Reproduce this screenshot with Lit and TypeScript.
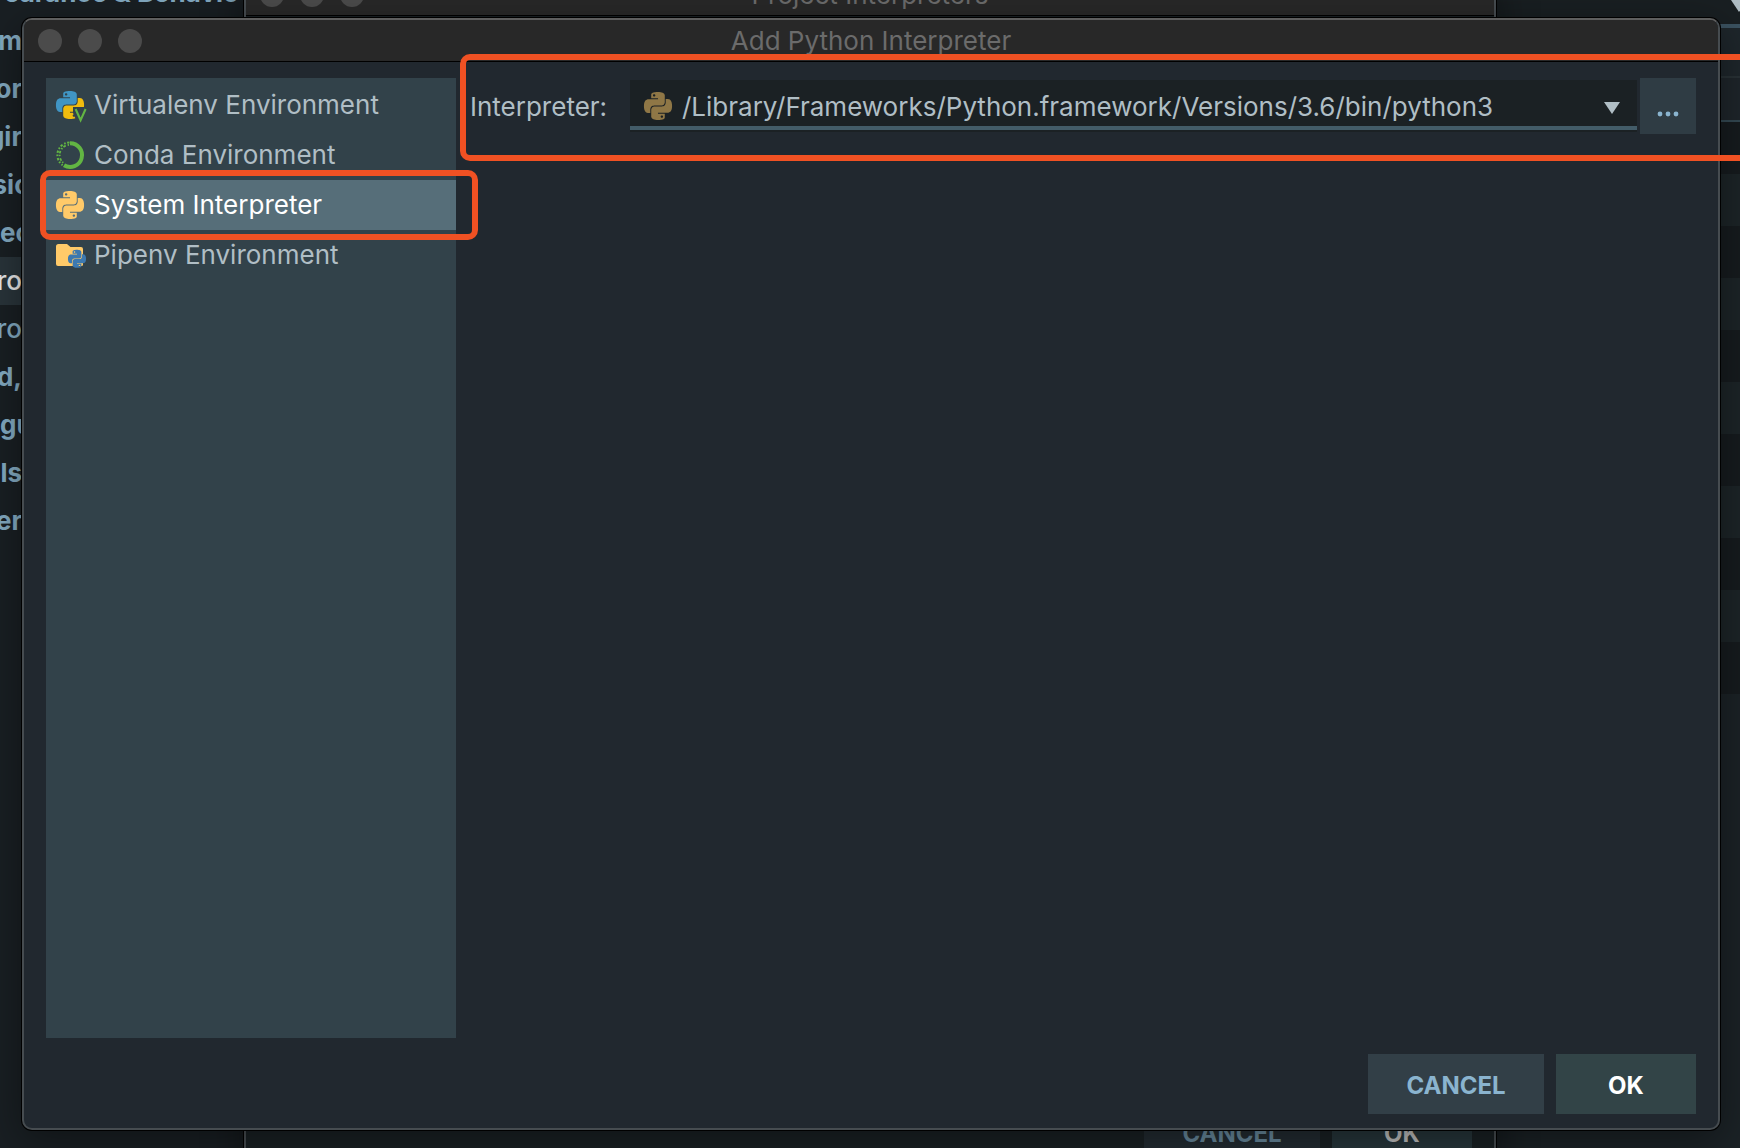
import { LitElement, html, css, svg } from "lit";
import { customElement, property, state } from "lit/decorators.js";
import { classMap } from "lit/directives/class-map.js";

const PY_TOP =
  "M14.25.18l.9.2.73.26.59.3.45.32.34.34.25.34.16.33.1.3.04.26.02.2-.01.13V8.5l-.05.63-.13.55-.21.46-.26.38-.3.31-.33.25-.35.19-.35.14-.33.1-.3.07-.26.04-.21.02H8.77l-.69.05-.59.14-.5.22-.41.27-.33.32-.27.35-.2.36-.15.37-.1.35-.07.32-.04.27-.02.21v3.06H3.17l-.21-.03-.28-.07-.32-.12-.35-.18-.36-.26-.36-.36-.35-.46-.32-.59-.28-.73-.21-.88-.14-1.05-.05-1.23.06-1.22.16-1.04.24-.87.32-.71.36-.57.4-.44.42-.33.42-.24.4-.16.36-.1.32-.05.24-.01h.16l.06.01h8.16v-.83H6.18l-.01-2.75-.02-.37.05-.34.11-.31.17-.28.25-.26.31-.23.38-.2.44-.18.51-.15.58-.12.64-.1.71-.06.77-.04.84-.02 1.27.05zm-6.3 1.98l-.23.33-.08.41.08.41.23.34.33.22.41.09.41-.09.33-.22.23-.34.08-.41-.08-.41-.23-.33-.33-.22-.41-.09-.41.09z";
const PY_BOTTOM =
  "M21.04 6.11l.28.06.32.12.35.18.36.27.36.35.35.47.32.59.28.73.21.88.14 1.04.05 1.23-.06 1.23-.16 1.04-.24.86-.32.71-.36.57-.4.45-.42.33-.42.24-.4.16-.36.09-.32.05-.24.02-.16-.01h-8.22v.82h5.84l.01 2.76.02.36-.05.34-.11.31-.17.29-.25.25-.31.24-.38.2-.44.17-.51.15-.58.13-.64.09-.71.07-.77.04-.84.01-1.27-.04-1.07-.14-.9-.2-.73-.25-.59-.3-.45-.33-.34-.34-.25-.34-.16-.33-.1-.3-.04-.25-.02-.2.01-.13v-5.34l.05-.64.13-.54.21-.46.26-.38.3-.32.33-.24.35-.2.35-.14.33-.1.3-.06.26-.04.21-.02.13-.01h5.84l.69-.05.59-.14.5-.21.41-.28.33-.32.27-.35.2-.36.15-.36.1-.35.07-.32.04-.28.02-.21V6.07h2.09l.14.01zm-6.47 14.25l-.23.33-.08.41.08.41.23.33.33.23.41.08.41-.08.33-.23.23-.33.08-.41-.08-.41-.23-.33-.33-.23-.41-.08-.41.08z";

const python = (top: string, bottom: string) => svg`
  <path d=${PY_TOP} fill=${top}></path>
  <path d=${PY_BOTTOM} fill=${bottom}></path>`;

type IconName = "virtualenv" | "conda" | "system" | "muted" | "pipenv";

@customElement("env-icon")
class EnvIcon extends LitElement {
  @property() name: IconName = "system";

  static styles = css`
    :host { display: block; width: 28px; height: 28px; flex: none; }
    .glyph { display: block; width: 28px; height: 28px; overflow: visible; }
  `;

  private shapes() {
    switch (this.name) {
      case "virtualenv":
        return svg`
          <g transform="scale(1.1667)">${python("#4095c4", "#f0bc0e")}</g>
          <path d="M17 16H31V31H21L17 22Z" fill="#32424a"></path>
          <path d="M19.6 18L24.6 29.2L29.6 18" fill="none" stroke="#62b543" stroke-width="2.1"></path>`;
      case "conda":
        return svg`
          <path d="M14 2.2A11.9 11.9 0 1 1 8 24.3" fill="none" stroke="#62b543" stroke-width="4"></path>
          <path d="M13.5 1.4A12.6 12.6 0 0 0 6.6 24.2" fill="none" stroke="#62b543" stroke-width="2" stroke-dasharray="2.4 1.5 1.6 1.9"></path>
          <path d="M13 3.8A10.2 10.2 0 0 0 7.6 22" fill="none" stroke="#62b543" stroke-width="1.8" stroke-dasharray="1.4 2 2.6 1.4"></path>`;
      case "pipenv":
        return svg`
          <path d="M0 5.5Q0 3 2.5 3H11L14.5 6H25Q27 6 27 8V23.5Q27 25 25.5 25H2Q0 25 0 23Z" fill="#ffca69"></path>
          <g transform="translate(12 8.8) scale(.75)">${python("#3d79b0", "#3d79b0")}</g>`;
      case "muted":
        return svg`<g transform="scale(1.1667)">${python("#8f7746", "#8f7746")}</g>`;
      default:
        return svg`<g transform="scale(1.1667)">${python("#ffca69", "#ffca69")}</g>`;
    }
  }

  render() {
    return html`<svg class="glyph" viewBox="0 0 28 28" aria-hidden="true">${this.shapes()}</svg>`;
  }
}

@customElement("title-bar")
class TitleBar extends LitElement {
  @property() label = "";

  static styles = css`
    :host {
      box-sizing: border-box;
      display: grid;
      grid-template-columns: 1fr auto 1fr;
      align-items: center;
      height: 42px;
      padding: 0 14px;
      background: #282828;
      border-bottom: 1px solid #000;
      border-radius: 8px 8px 0 0;
      font: 400 26px/32px Inter, "Liberation Sans", sans-serif;
      color: #6b6b6b;
    }
    .dots { display: flex; gap: 16px; }
    .dot { width: 24px; height: 24px; border-radius: 50%; background: #4b4b4b; }
    .label { white-space: nowrap; padding-top: 1px; }
  `;

  render() {
    return html`
      <div class="dots"><span class="dot"></span><span class="dot"></span><span class="dot"></span></div>
      <div class="label">${this.label}</div>`;
  }
}

@customElement("settings-backdrop")
class SettingsBackdrop extends LitElement {
  static styles = css`
    :host {
      display: flex;
      justify-content: space-between;
      height: 100%;
      background: #1b2226;
      font: 700 26px/32px Inter, "Liberation Sans", sans-serif;
      color: #82a9c0;
    }
    .tree { width: 243px; background: #191f23; }
    .row { display: flex; width: 22px; height: 48px; align-items: center; justify-content: flex-end; white-space: nowrap; }
    .row:first-child { width: 100%; margin-top: -31px; }
    .start { justify-content: flex-start; }
    .center { justify-content: center; }
    .plain { font-weight: 500; }
    .current { background: #29343a; color: #e8e8e8; }
    .pane { width: 244px; }
    .combo { display: flex; height: 24px; justify-content: flex-end; background: #191f22; border-bottom: 4px solid #3b5260; overflow: hidden; }
    .arrow { width: 16px; height: 12px; }
    .gap { height: 48px; background: #1e262b; border-bottom: 2px solid #283135; }
    .head { height: 42px; background: #1e252a; border-bottom: 2px solid #334852; }
    .stripe { height: 52px; background: #161b1e; }
    .stripe:nth-child(even) { background: #1c2427; }
  `;

  private rows = [
    { text: "earance & Behavio", align: "center" },
    { text: "m" },
    { text: "or" },
    { text: "gir" },
    { text: "sic", align: "center" },
    { text: "ec", align: "start" },
    { text: "ro", plain: true, current: true },
    { text: "ro", plain: true },
    { text: "d," },
    { text: "gu", align: "start" },
    { text: "ls" },
    { text: "er" },
  ];

  render() {
    return html`
      <div class="tree">
        ${this.rows.map(
          (r) =>
            html`<div class=${classMap({ row: true, plain: !!r.plain, current: !!r.current, start: r.align === "start", center: r.align === "center" })}>${r.text}</div>`
        )}
      </div>
      <div class="pane">
        <div class="combo">
          <svg class="arrow" viewBox="0 0 16 12" aria-hidden="true"><path d="M7 0H23L15 12Z" fill="#b0bec5"></path></svg>
        </div>
        <div class="gap"></div>
        <div class="head"></div>
        <div>${Array.from({ length: 11 }, () => html`<div class="stripe"></div>`)}</div>
      </div>`;
  }
}

@customElement("app-root")
class AppRoot extends LitElement {
  @state() private selected = 2;

  private environments: { icon: IconName; label: string }[] = [
    { icon: "virtualenv", label: "Virtualenv Environment" },
    { icon: "conda", label: "Conda Environment" },
    { icon: "system", label: "System Interpreter" },
    { icon: "pipenv", label: "Pipenv Environment" },
  ];

  static styles = css`
    :host {
      display: block;
      position: relative;
      height: 100vh;
      overflow: hidden;
      font: 400 26px/32px Inter, "Liberation Sans", sans-serif;
      color: #b0bec5;
    }
    * { box-sizing: border-box; }
    button, select { font: inherit; color: inherit; border: 0; margin: 0; cursor: pointer; }

    .window {
      position: absolute;
      display: flex;
      flex-direction: column;
      border: 2px solid #464c50;
      border-radius: 10px;
      background: #21282f;
      box-shadow: 0 0 0 1px #000, 0 10px 40px rgba(0, 0, 0, 0.4);
    }
    .behind { inset: -28px 244px -30px 244px; background: #192023; }
    .front { inset: 18px 20px 18px 22px; border-top-color: #5e5e5e; }

    .actions { display: flex; justify-content: flex-end; gap: 12px; }
    .action { height: 60px; padding: 4px 0 0; font-weight: 700; font-size: 24px; }
    .cancel { width: 176px; background: #323f47; color: #8ab4cf; }
    .ok { width: 140px; background: #324447; color: #fff; }
    .behind .actions { margin-top: auto; padding: 0 22px 14px; }
    .behind .cancel { background: #222b31; color: #66879b; }
    .behind .ok { background: #26353a; color: #bdbdbd; }

    .body { flex: 1; display: flex; flex-direction: column; gap: 16px; padding: 16px 22px 14px; }
    .columns { flex: 1; display: flex; gap: 14px; }
    .list { width: 410px; padding-top: 2px; background: #32424a; }
    .item { position: relative; }
    .choice { display: flex; align-items: center; gap: 10px; width: 100%; height: 50px; padding: 0 10px; background: transparent; text-align: left; white-space: nowrap; }
    .item.on .choice { background: #566e79; color: #fff; }
    .mark { position: absolute; z-index: 1; border: 6px solid #f05123; border-radius: 10px; pointer-events: none; }
    .mark-item { inset: -10px -22px -10px -6px; }

    .field { flex: 1; align-self: flex-start; position: relative; display: flex; align-items: center; }
    .mark-field { inset: -24px -80px -27px -10px; }
    .caption { width: 160px; padding-top: 2px; }
    .combo { flex: 1; position: relative; display: flex; margin-right: 3px; }
    .path { flex: 1; min-width: 0; height: 52px; padding: 4px 60px 0 52px; appearance: none; background: #1b2124; border-bottom: 2px solid #1b2124; box-shadow: inset 0 -4px 0 #435c68; border-radius: 0; outline: none; }
    .combo-icon { position: absolute; left: 14px; top: 12px; pointer-events: none; }
    .combo-arrow { position: absolute; right: 17px; top: 22px; width: 16px; height: 12px; pointer-events: none; }
    .browse { display: grid; place-items: center; width: 56px; height: 56px; padding: 16px 0 0; background: #2f3c44; color: #8ab4cf; }
    .ellipsis { width: 22px; height: 6px; }
  `;

  private actions(tab: boolean) {
    return html`
      <div class="actions">
        <button class="action cancel" tabindex=${tab ? 0 : -1}>CANCEL</button>
        <button class="action ok" tabindex=${tab ? 0 : -1}>OK</button>
      </div>`;
  }

  render() {
    return html`
      <settings-backdrop></settings-backdrop>
      <section class="window behind">
        <title-bar label="Project Interpreters"></title-bar>
        ${this.actions(false)}
      </section>
      <section class="window front" role="dialog" aria-label="Add Python Interpreter">
        <title-bar label="Add Python Interpreter"></title-bar>
        <div class="body">
          <div class="columns">
            <nav class="list">
              ${this.environments.map(
                (e, i) => html`
                  <div class=${classMap({ item: true, on: i === this.selected })}>
                    <button class="choice" @click=${() => (this.selected = i)}>
                      <env-icon name=${e.icon}></env-icon><span>${e.label}</span>
                    </button>
                    ${i === this.selected ? html`<div class="mark mark-item"></div>` : null}
                  </div>`
              )}
            </nav>
            <div class="field">
              <label class="caption" for="interpreter">Interpreter:</label>
              <div class="combo">
                <select class="path" id="interpreter">
                  <option>/Library/Frameworks/Python.framework/Versions/3.6/bin/python3</option>
                </select>
                <env-icon class="combo-icon" name="muted"></env-icon>
                <svg class="combo-arrow" viewBox="0 0 16 12" aria-hidden="true"><path d="M0 0H16L8 12Z" fill="#b0bec5"></path></svg>
              </div>
              <button class="browse" aria-label="Browse">
                <svg class="ellipsis" viewBox="0 0 22 6" aria-hidden="true">
                  <circle cx="3" cy="3" r="2.4" fill="#8ab4cf"></circle>
                  <circle cx="11" cy="3" r="2.4" fill="#8ab4cf"></circle>
                  <circle cx="19" cy="3" r="2.4" fill="#8ab4cf"></circle>
                </svg>
              </button>
              <div class="mark mark-field"></div>
            </div>
          </div>
          ${this.actions(true)}
        </div>
      </section>`;
  }
}
